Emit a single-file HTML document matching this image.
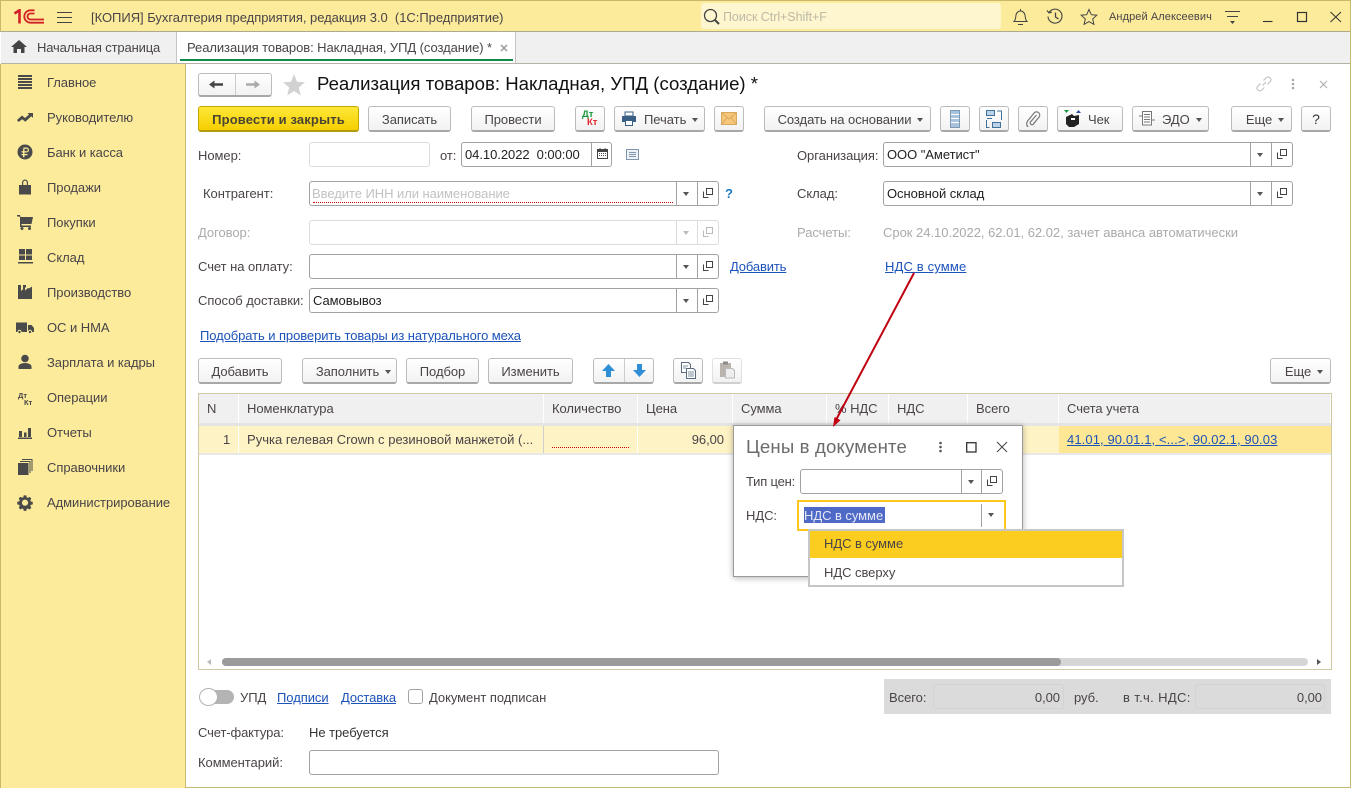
<!DOCTYPE html>
<html lang="ru"><head><meta charset="utf-8"><title>Реализация товаров</title>
<style>
*{box-sizing:border-box}
html,body{margin:0;padding:0}
body{width:1351px;height:788px;position:relative;overflow:hidden;background:#fff;font:13px "Liberation Sans",Arial,sans-serif;color:#4a4448;letter-spacing:-.05px}
.a,.t,.b,.f,svg.i{position:absolute}
.t{white-space:nowrap;line-height:16px;margin-top:1px}
.k{color:#222}
.l{color:#1c53b8;text-decoration:underline}
.g{color:#aaa}
.b{height:26px;top:106px;border:1px solid #bcbcbc;border-bottom:2px solid #a8a8a8;border-radius:3px;background:linear-gradient(#fff,#f2f2f2);text-align:center;line-height:25px;white-space:nowrap}
.r{top:358px}
.ar{display:inline-block;width:0;height:0;border:3px solid transparent;border-top:4px solid #555;border-bottom:0;margin-left:6px;vertical-align:2px}
.f{border:1px solid #a2a2a2;border-radius:3px;background:#fff;height:25px}
.f.dis{border-color:#dcdcdc}
.f u{position:absolute;top:0;bottom:0;width:1px;background:#a2a2a2}
.f.dis u{background:#dcdcdc}
.tri{position:absolute;width:0;height:0;border:3px solid transparent;border-top:4px solid #555;border-bottom:0}
.f.dis .tri{border-top-color:#bbb}
.v{position:absolute;left:3px;top:4px;line-height:16px;color:#222;white-space:nowrap}
.o{position:absolute;width:10px;height:10px;fill:none;stroke:#444;stroke-width:1}
.f.dis .o{stroke:#bbb}
.h{position:absolute;top:394px;height:29px;background:#f0f0f0;border-right:1px solid #fff;line-height:29px;padding-left:8px;white-space:nowrap}
.s{position:absolute;left:16px;width:18px;height:18px;fill:#4a4a4a}
</style></head><body>
<svg width="0" height="0" style="position:absolute"><defs><symbol id="op" viewBox="0 0 10 10"><path d="M3.500 .5h6v6h-6zM.5 3.500v6h5" fill="none" stroke-width="1"/></symbol></defs></svg>

<!-- top bar -->
<div class="a" style="left:0;top:0;width:1351px;height:32px;background:#fbeb9b;border:1px solid #c6b96c;border-bottom:1px solid #aeaa8f"></div>
<svg class="i" style="left:13px;top:9px" width="32" height="15" viewBox="0 0 32 15" fill="none" stroke="#d32027"><path d="M1.500 4.500l5-3.300V14.500" stroke-width="2.600"/><path d="M31 13.700H17.500a6 6 0 1 1 0-12.400h4" stroke-width="1.800"/><path d="M31 10.500H17.500a3 3 0 1 1 0-6h4" stroke-width="1.800"/></svg>
<svg class="i" style="left:57px;top:11px" width="15" height="12" stroke="#444"><path d="M0 1.500h15M0 6.500h15M0 11.500h15"/></svg>
<div class="t" style="left:91px;top:9px;letter-spacing:-.03px">[КОПИЯ] Бухгалтерия предприятия, редакция 3.0&nbsp; (1С:Предприятие)</div>
<div class="a" style="left:701px;top:3px;width:300px;height:26px;background:#fdf6cf;border-radius:3px"></div>
<svg class="i" style="left:702px;top:7px" width="19" height="19" fill="none" stroke="#444"><circle cx="8.500" cy="8.500" r="6" stroke-width="1.300"/><path d="M13 13l4 4" stroke-width="2"/></svg>
<div class="t" style="left:723px;top:8px;color:#bdb9a6;font-size:12.500px">Поиск Ctrl+Shift+F</div>
<svg class="i" style="left:1012px;top:8px" width="17" height="18" fill="none" stroke="#444"><path d="M2 13.500c2-2 1.500-4 2-6.500.5-2.500 2.500-4 4.500-4s4 1.500 4.500 4c.5 2.500 0 4.500 2 6.500zM8.500 1v2M6 16.500h5"/></svg>
<svg class="i" style="left:1046px;top:8px" width="18" height="17" fill="none" stroke="#444"><path d="M3 4.500a7 7 0 1 1-1 4M1 2.500l2 2.500 3-1" stroke-width="1.100"/><path d="M9.500 4.500v4.500l3 2" stroke-width="1.300"/></svg>
<svg class="i" style="left:1080px;top:8px" width="18" height="18" fill="none" stroke="#444"><path d="M9 1.500l2.300 5.200 5.500.5-4.100 3.700 1.200 5.500L9 13.600l-4.900 2.800 1.200-5.500L1.200 7.200l5.500-.5z"/></svg>
<div class="t" style="left:1109px;top:8px;font-size:11px;letter-spacing:.08px">Андрей Алексеевич</div>
<svg class="i" style="left:1225px;top:10px" width="16" height="15" stroke="#444" fill="#444"><path d="M0 1.500h15M2 6.500h11" fill="none"/><path d="M5 11h5l-2.500 3z" stroke="none"/></svg>
<svg class="i" style="left:1263px;top:10px" width="80" height="14" fill="none" stroke="#333"><path d="M0 11.500h9.500" stroke-width="1.100"/><rect x="34.500" y="2.500" width="9" height="9" stroke-width="1.200"/><path d="M67.500 2l10.500 10M78 2L67.500 12" stroke-width="1"/></svg>

<!-- tabs -->
<div class="a" style="left:1px;top:32px;width:1349px;height:32px;background:#f0f0f0;border-bottom:1px solid #b5b3a6"></div>
<div class="a" style="left:176px;top:32px;width:340px;height:32px;background:#fff;border-left:1px solid #c4c4c4;border-right:1px solid #c4c4c4;border-bottom:1px solid #b5b3a6"></div>
<div class="a" style="left:180px;top:59px;width:333px;height:2px;background:#0e8a4a"></div>
<svg class="i" style="left:11px;top:40px" width="16" height="13" fill="#444"><path d="M8 0l8 7h-2.500v6H10V9H6v4H2.500V7H0z"/></svg>
<div class="t" style="left:37px;top:39px;letter-spacing:-.15px">Начальная страница</div>
<div class="t" style="left:187px;top:39px;letter-spacing:-.07px">Реализация товаров: Накладная, УПД (создание) *</div>
<svg class="i" style="left:500px;top:44px" width="8" height="8" stroke="#999" stroke-width="1.500"><path d="M1 1l6 6M7 1l-6 6"/></svg>

<!-- sidebar -->
<div class="a" style="left:0;top:64px;width:186px;height:724px;background:#fbeb9b;border-left:1px solid #c6b96c;border-right:1px solid #c6b96c"></div>
<svg class="s" style="top:73px" viewBox="0 0 18 18"><path d="M2 2h14v2H2zM2 5h14v2H2zM2 8h14v2H2zM2 11h14v2H2zM2 14h14v2H2z"/></svg>
<svg class="s" style="top:108px" viewBox="0 0 18 18"><path d="M1 12l5-4.500 3 2.500 4-3.500-1.500-1.500H17v5l-1.700-1.700-6 5.500-3-2.500L2.500 14z"/></svg>
<svg class="s" style="top:143px" viewBox="0 0 18 18"><circle cx="9" cy="9" r="7.500"/><path d="M7.500 4.500h3a2.300 2.300 0 0 1 0 5h-2V11h3v1.300h-3v2H7v-2H5.500V11H7V9.500H5.500V8.300H7zm1 1.200v2.600h2a1.300 1.300 0 0 0 0-2.600z" fill="#fbeb9b"/></svg>
<svg class="s" style="top:178px" viewBox="0 0 18 18"><path d="M3 7h3V4.500a3 3 0 0 1 6 0V7h3v9.500H3zM7.200 7h3.600V4.500a1.800 1.800 0 0 0-3.600 0z"/></svg>
<svg class="s" style="top:213px" viewBox="0 0 18 18"><path d="M1 2h3l.5 2H17l-1.500 7H5.500v1.500H15V14H4V4L2.800 3.500H1z"/><circle cx="6" cy="15.500" r="1.500"/><circle cx="13.500" cy="15.500" r="1.500"/></svg>
<svg class="s" style="top:248px" viewBox="0 0 18 18"><path d="M3 1h6v5.500H3zM10 1h6v5.500h-6zM3 7.500h6V12H3zM10 7.500h6V12h-6zM2 14h15v1.500H2z"/></svg>
<svg class="s" style="top:283px" viewBox="0 0 18 18"><path d="M2 2h3v6l4-3.500v3l3-2.500 1 .5 3-2V16H2zM7 2h3v2L7 6.500z"/></svg>
<svg class="s" style="top:318px" viewBox="0 0 18 18"><path d="M0 4.500h11V14H0zM12 7h3.500l2.500 3v4h-6z"/><circle cx="3.500" cy="14" r="1.700" stroke="#fbeb9b"/><circle cx="14" cy="14" r="1.700" stroke="#fbeb9b"/></svg>
<svg class="s" style="top:353px" viewBox="0 0 18 18"><circle cx="9" cy="5.500" r="3.800"/><path d="M2.500 16v-2.500c0-2 3-3.500 6.500-3.500s6.500 1.500 6.500 3.500V16z"/></svg>
<div class="t" style="left:18px;top:391px;font-size:7.500px;line-height:8px;font-weight:bold;letter-spacing:0">Дт</div>
<div class="t" style="left:24px;top:398px;font-size:7.500px;line-height:8px;font-weight:bold;letter-spacing:0">Кт</div>
<svg class="s" style="top:423px" viewBox="0 0 18 18"><path d="M3 8h3v6H3zM8 9.500h2.500V14H8zM12 5h3v9h-3zM2 14.500h14V16H2z"/></svg>
<svg class="s" style="top:458px" viewBox="0 0 18 18"><path d="M2 5h10.500v12H2z"/><path d="M4 3.500h10v11.500M6 1.500h10v11.500" fill="none" stroke="#4a4a4a"/></svg>
<svg class="s" style="top:493px" viewBox="0 0 18 18"><path fill-rule="evenodd" d="M7.500 1.500h3l.4 2.200 1.300.6 2-1.200 2 2-1.200 2 .6 1.300 2.200.4v2.900l-2.200.5-.6 1.300 1.200 2-2 2-2-1.200-1.300.6-.4 2.100h-3l-.4-2.100-1.300-.6-2 1.200-2-2 1.200-2-.6-1.300-2.200-.5V8.700l2.200-.4.6-1.300-1.200-2 2-2 2 1.200 1.300-.6zM9 6.300a3.500 3.500 0 1 0 0 7 3.500 3.500 0 0 0 0-7z" transform="translate(1.100 1.100) scale(.88)"/></svg>
<div class="t" style="left:47px;top:74px">Главное</div>
<div class="t" style="left:47px;top:109px">Руководителю</div>
<div class="t" style="left:47px;top:144px">Банк и касса</div>
<div class="t" style="left:47px;top:179px">Продажи</div>
<div class="t" style="left:47px;top:214px">Покупки</div>
<div class="t" style="left:47px;top:249px">Склад</div>
<div class="t" style="left:47px;top:284px">Производство</div>
<div class="t" style="left:47px;top:319px">ОС и НМА</div>
<div class="t" style="left:47px;top:354px">Зарплата и кадры</div>
<div class="t" style="left:47px;top:389px">Операции</div>
<div class="t" style="left:47px;top:424px">Отчеты</div>
<div class="t" style="left:47px;top:459px">Справочники</div>
<div class="t" style="left:47px;top:494px">Администрирование</div>

<!-- right & bottom frame -->
<div class="a" style="left:1350px;top:0;width:1px;height:788px;background:#c6b96c"></div>
<div class="a" style="left:186px;top:787px;width:1165px;height:1px;background:#c6b96c"></div>

<!-- form header -->
<div class="a" style="left:198px;top:73px;width:74px;height:24px;border:1px solid #bcbcbc;border-bottom:2px solid #a8a8a8;border-radius:3px;background:linear-gradient(#fff,#f2f2f2)"></div>
<div class="a" style="left:235px;top:74px;width:1px;height:21px;background:#ccc"></div>
<svg class="i" style="left:209px;top:79px" width="15" height="11" fill="#444"><path d="M0 5.500L5.500 1.500v2.800H14v2.400H5.500v2.800z"/></svg>
<svg class="i" style="left:246px;top:79px" width="15" height="11" fill="#aaa"><path d="M14 5.500L8.500 1.500v2.800H0v2.400h8.500v2.800z"/></svg>
<svg class="i" style="left:282px;top:73px" width="24" height="23" fill="#d2d2d2"><path d="M12 1l3 7.700 8 .6-6.200 5.200 2 8L12 18l-6.800 4.500 2-8L1 9.300l8-.6z"/></svg>
<div class="t k" style="left:317px;top:72px;font-size:18.600px;line-height:22px;color:#111;letter-spacing:0">Реализация товаров: Накладная, УПД (создание) *</div>
<svg class="i" style="left:1255px;top:75px" width="18" height="18" fill="none" stroke="#c8c8c8" stroke-width="1.300"><path d="M7.500 10.500L11 7M5.500 8.500l-2.700 2.700a2.700 2.700 0 0 0 3.900 3.900l2.700-2.700M8.500 5.500l2.700-2.700a2.700 2.700 0 0 1 3.900 3.900l-2.700 2.700"/></svg>
<svg class="i" style="left:1291px;top:78px" width="4" height="12" fill="#aaa"><circle cx="2" cy="2" r="1.300"/><circle cx="2" cy="6" r="1.300"/><circle cx="2" cy="10" r="1.300"/></svg>
<svg class="i" style="left:1319px;top:80px" width="9" height="9" stroke="#aaa"><path d="M1 1l7 7M8 1l-7 7"/></svg>

<!-- toolbar -->
<div class="b" style="left:198px;width:161px;background:linear-gradient(#ffe839,#f5cf00);border-color:#c5a700;border-bottom-color:#b29a10;font-weight:bold;color:#4a4433;letter-spacing:.13px">Провести и закрыть</div>
<div class="b" style="left:368px;width:83px">Записать</div>
<div class="b" style="left:471px;width:84px">Провести</div>
<div class="b" style="left:575px;width:30px"></div>
<div class="t" style="left:582px;top:108px;font-size:9.500px;line-height:11px;font-weight:bold;color:#1a9a3a;letter-spacing:0">Дт</div>
<div class="t" style="left:587px;top:116px;font-size:9.500px;line-height:11px;font-weight:bold;color:#e0262e;letter-spacing:0">Кт</div>
<div class="b" style="left:614px;width:91px;text-align:left;padding-left:29px">Печать<span class="ar"></span></div>
<svg class="i" style="left:621px;top:111px" width="16" height="15"><path d="M4 1h8v4H4z" fill="#fff" stroke="#3a5f85"/><path d="M1 5h14v6h-3V9H4v2H1z" fill="#3a5f85"/><path d="M4.500 9.500h7v5h-7z" fill="#fff" stroke="#3a5f85"/></svg>
<div class="b" style="left:714px;width:30px"></div>
<svg class="i" style="left:721px;top:112px" width="16" height="13"><rect x=".5" y=".5" width="15" height="12" fill="#f6c779" stroke="#d9a860"/><path d="M.5 .5L8 7l7.500-6.500M.5 12.500L6 5.500M15.500 12.500L10 5.500" fill="none" stroke="#d9a860"/></svg>
<div class="b" style="left:764px;width:167px;padding-left:6px">Создать на основании<span class="ar"></span></div>
<div class="b" style="left:940px;width:30px"></div>
<svg class="i" style="left:950px;top:110px" width="10" height="18"><rect x=".5" y=".5" width="9" height="17" fill="#a9c3dc" stroke="#7d9ab5"/><path d="M1 4.500h8M1 8.500h8M1 12.500h8" stroke="#fff"/></svg>
<div class="b" style="left:979px;width:30px"></div>
<svg class="i" style="left:986px;top:110px" width="16" height="18" fill="none" stroke="#41729c"><rect x=".5" y=".5" width="8" height="5" fill="#bcd2e6"/><rect x="6.500" y="12.500" width="8" height="5" fill="#bcd2e6"/><path d="M1 8.500h5M11 1h4.500v9M.5 10v7.500h3"/></svg>
<div class="b" style="left:1018px;width:30px"></div>
<svg class="i" style="left:1025px;top:110px" width="16" height="17" fill="none" stroke="#777" stroke-width="1.200"><path d="M11.500 5l-6 7a1.800 1.800 0 0 0 2.600 2.400l6-7.400a3.200 3.200 0 0 0-4.800-4.200l-6.500 8a4.600 4.600 0 0 0 7 6"/></svg>
<div class="b" style="left:1057px;width:66px;text-align:left;padding-left:30px">Чек</div>
<svg class="i" style="left:1063px;top:110px" width="20" height="18"><path d="M1 0h5L3.500 3z" fill="#1a9a3a"/><path d="M13 3h5l-2.500-3z" fill="#2a4fa0"/><path d="M3 7l6-3 2 2 5-1v9l-5 3H6l-3-3z" fill="#222"/><rect x="8" y="8" width="4" height="2" fill="#fff"/></svg>
<div class="b" style="left:1132px;width:77px;text-align:left;padding-left:29px">ЭДО<span class="ar"></span></div>
<svg class="i" style="left:1139px;top:111px" width="16" height="15" fill="none" stroke="#777"><rect x="3.500" y=".5" width="9" height="13.500" fill="#fff"/><path d="M5 3.500h6M5 6h6M5 8.500h6M5 11h6M0 5h3M13 9h3"/></svg>
<div class="b" style="left:1231px;width:61px;padding-left:7px">Еще<span class="ar"></span></div>
<div class="b" style="left:1301px;width:30px;font-size:14px;color:#333">?</div>

<!-- form left -->
<div class="t" style="left:198px;top:147px">Номер:</div>
<div class="f dis" style="left:309px;top:142px;width:121px"></div>
<div class="t" style="left:440px;top:147px">от:</div>
<div class="f" style="left:461px;top:142px;width:151px"><span class="v">04.10.2022&nbsp; 0:00:00</span><u style="left:129px"></u>
<svg class="a" style="left:135px;top:5px" width="11" height="11"><path d="M.5 1.500h10v9H.5z" fill="none" stroke="#444"/><path d="M.5 1.500h10v2.500H.5zM2.500 0h1v2h-1zM7.500 0h1v2h-1z" fill="#444"/><path d="M2 5.500h7M2 7.500h7" stroke="#444" stroke-dasharray="1 1"/></svg></div>
<svg class="i" style="left:626px;top:149px" width="14" height="12" fill="none" stroke="#7d95ad"><rect x=".5" y=".5" width="12" height="10" fill="#eef2f6"/><path d="M3 3.500h7M3 5.500h7M3 7.500h7"/></svg>

<div class="t" style="left:203px;top:185px">Контрагент:</div>
<div class="f" style="left:309px;top:181px;width:410px"><span class="v" style="color:#c2c2c2;left:2px">Введите ИНН или наименование</span><div class="a" style="left:3px;top:20px;width:360px;border-top:1px dotted #d00"></div><u style="left:366px"></u><u style="left:387px"></u><i class="tri" style="left:373px;top:10px"></i><svg class="o" style="left:393px;top:6px"><use href="#op"/></svg></div>
<div class="t" style="left:725px;top:185px;color:#1a7ac4;font-weight:bold">?</div>

<div class="t g" style="left:198px;top:224px">Договор:</div>
<div class="f dis" style="left:309px;top:220px;width:410px"><u style="left:366px"></u><u style="left:387px"></u><i class="tri" style="left:373px;top:10px"></i><svg class="o" style="left:393px;top:6px"><use href="#op"/></svg></div>

<div class="t" style="left:198px;top:258px">Счет на оплату:</div>
<div class="f" style="left:309px;top:254px;width:410px"><u style="left:366px"></u><u style="left:387px"></u><i class="tri" style="left:373px;top:10px"></i><svg class="o" style="left:393px;top:6px"><use href="#op"/></svg></div>
<div class="t l" style="left:730px;top:258px;letter-spacing:-.15px">Добавить</div>

<div class="t" style="left:198px;top:292px">Способ доставки:</div>
<div class="f" style="left:309px;top:288px;width:410px"><span class="v">Самовывоз</span><u style="left:366px"></u><u style="left:387px"></u><i class="tri" style="left:373px;top:10px"></i><svg class="o" style="left:393px;top:6px"><use href="#op"/></svg></div>
<div class="t l" style="left:200px;top:327px;letter-spacing:-.08px">Подобрать и проверить товары из натурального меха</div>

<!-- form right -->
<div class="t" style="left:797px;top:147px">Организация:</div>
<div class="f" style="left:883px;top:142px;width:410px"><span class="v">ООО "Аметист"</span><u style="left:366px"></u><u style="left:387px"></u><i class="tri" style="left:373px;top:10px"></i><svg class="o" style="left:393px;top:6px"><use href="#op"/></svg></div>
<div class="t" style="left:797px;top:185px">Склад:</div>
<div class="f" style="left:883px;top:181px;width:410px"><span class="v">Основной склад</span><u style="left:366px"></u><u style="left:387px"></u><i class="tri" style="left:373px;top:10px"></i><svg class="o" style="left:393px;top:6px"><use href="#op"/></svg></div>
<div class="t g" style="left:797px;top:224px">Расчеты:</div>
<div class="t g" style="left:883px;top:224px;letter-spacing:-.02px">Срок 24.10.2022, 62.01, 62.02, зачет аванса автоматически</div>
<div class="t l" style="left:885px;top:258px;letter-spacing:.15px">НДС в сумме</div>

<!-- table toolbar -->
<div class="b r" style="left:198px;width:84px">Добавить</div>
<div class="b r" style="left:302px;width:95px;padding-left:8px">Заполнить<span class="ar"></span></div>
<div class="b r" style="left:406px;width:73px">Подбор</div>
<div class="b r" style="left:488px;width:85px">Изменить</div>
<div class="b r" style="left:593px;width:61px"></div>
<div class="a" style="left:624px;top:359px;width:1px;height:23px;background:#ccc"></div>
<svg class="i" style="left:601px;top:363px" width="15" height="15" fill="#2f8fd6"><path d="M7.500 1L14 8h-4v6H5V8H1z"/></svg>
<svg class="i" style="left:632px;top:363px" width="15" height="15" fill="#2f8fd6"><path d="M7.500 14L14 7h-4V1H5v6H1z"/></svg>
<div class="b r" style="left:673px;width:30px"></div>
<svg class="i" style="left:680px;top:362px" width="17" height="17" fill="#fff" stroke="#5a6d80"><path d="M1.500 .5h7l2 2v8h-9z"/><path d="M6.500 6.500h7l2 2v8h-9z"/><path d="M3 4h5M3 6h3M8 10h6M8 12h6M8 14h6" stroke-width=".8"/></svg>
<div class="b r" style="left:712px;width:30px;border-color:#e0e0e0;border-bottom-color:#d0d0d0"></div>
<svg class="i" style="left:719px;top:361px" width="17" height="18"><rect x="1" y="2" width="11" height="14" fill="#b9b4ae"/><rect x="4" y="0.500" width="5" height="3" fill="#8f8a86"/><path d="M6.500 7.500h7l2 2v7.500h-9z" fill="#eee" stroke="#bbb"/></svg>
<div class="b r" style="left:1270px;width:61px;padding-left:7px">Еще<span class="ar"></span></div>

<!-- table -->
<div class="a" style="left:198px;top:393px;width:1134px;height:277px;border:1px solid #cfc9a4;background:#fff"></div>
<div class="a" style="left:199px;top:423px;width:1132px;height:3px;background:#e4e4e4"></div>
<div class="h" style="left:199px;width:40px">N</div>
<div class="h" style="left:239px;width:305px">Номенклатура</div>
<div class="h" style="left:544px;width:94px">Количество</div>
<div class="h" style="left:638px;width:95px">Цена</div>
<div class="h" style="left:733px;width:94px">Сумма</div>
<div class="h" style="left:827px;width:62px">% НДС</div>
<div class="h" style="left:889px;width:79px">НДС</div>
<div class="h" style="left:968px;width:91px">Всего</div>
<div class="h" style="left:1059px;width:272px">Счета учета</div>
<div class="a" style="left:199px;top:426px;width:1132px;height:27px;background:#fef3c5"></div>
<div class="a" style="left:1059px;top:426px;width:272px;height:27px;background:#fde694"></div>
<div class="a" style="left:238px;top:426px;width:1px;height:27px;background:#fff"></div>
<div class="a" style="left:543px;top:426px;width:1px;height:28px;background:#cfcfcf"></div>
<div class="a" style="left:637px;top:426px;width:1px;height:27px;background:#fff"></div>
<div class="a" style="left:199px;top:453px;width:1132px;height:2px;background:#e8e8e8"></div>
<div class="t" style="left:223px;top:431px">1</div>
<div class="t" style="left:247px;top:431px;letter-spacing:.02px">Ручка гелевая Crown с резиновой манжетой (...</div>
<div class="a" style="left:552px;top:447px;width:77px;border-top:1px dotted #c00"></div>
<div class="t" style="right:627px;top:431px">96,00</div>
<div class="t l" style="left:1067px;top:431px;letter-spacing:.1px">41.01, 90.01.1, &lt;...&gt;, 90.02.1, 90.03</div>
<i class="tri" style="left:207px;top:659px;border:3px solid transparent;border-right:4px solid #bbb;border-left:0"></i>
<div class="a" style="left:222px;top:658px;width:1086px;height:8px;background:#d6d6d6;border-radius:4px"></div>
<div class="a" style="left:222px;top:658px;width:839px;height:8px;background:#9b9b9b;border-radius:4px"></div>
<i class="tri" style="left:1317px;top:659px;border:3px solid transparent;border-left:4px solid #555;border-right:0"></i>

<!-- bottom -->
<div class="a" style="left:207px;top:690px;width:27px;height:14px;background:#b4b4b4;border-radius:7px"></div>
<div class="a" style="left:199px;top:688px;width:19px;height:18px;background:#fff;border:1px solid #b4b4b4;border-radius:50%"></div>
<div class="t" style="left:240px;top:689px">УПД</div>
<div class="t l" style="left:277px;top:689px">Подписи</div>
<div class="t l" style="left:341px;top:689px;letter-spacing:-.1px">Доставка</div>
<div class="a" style="left:408px;top:689px;width:15px;height:15px;border:1px solid #a2a2a2;border-radius:3px;background:#fff"></div>
<div class="t" style="left:429px;top:689px">Документ подписан</div>
<div class="t" style="left:198px;top:724px;letter-spacing:-.12px">Счет-фактура:</div>
<div class="t" style="left:309px;top:724px;color:#333">Не требуется</div>
<div class="t" style="left:198px;top:754px">Комментарий:</div>
<div class="f" style="left:309px;top:750px;width:410px"></div>

<div class="a" style="left:884px;top:679px;width:447px;height:35px;background:#dbdbdb"></div>
<div class="a" style="left:933px;top:684px;width:131px;height:25px;border:1px solid #d3d3d3;border-radius:3px"></div>
<div class="a" style="left:1195px;top:684px;width:130px;height:25px;border:1px solid #d3d3d3;border-radius:3px"></div>
<div class="t" style="left:889px;top:689px">Всего:</div>
<div class="t" style="right:291px;top:689px">0,00</div>
<div class="t" style="left:1074px;top:689px">руб.</div>
<div class="t" style="left:1123px;top:689px;letter-spacing:.35px">в т.ч. НДС:</div>
<div class="t" style="right:29px;top:689px">0,00</div>

<!-- popup -->
<div class="a" style="left:733px;top:425px;width:290px;height:152px;background:#fff;border:1px solid #9a9a9a;box-shadow:0 1px 6px rgba(0,0,0,.3)"></div>
<div class="t" style="left:746px;top:435px;font-size:18.600px;line-height:22px;color:#6b6b6b;letter-spacing:.15px">Цены в документе</div>
<svg class="i" style="left:938px;top:441px" width="5" height="12" fill="#555"><circle cx="2.500" cy="2" r="1.300"/><circle cx="2.500" cy="6" r="1.300"/><circle cx="2.500" cy="10" r="1.300"/></svg>
<svg class="i" style="left:966px;top:442px" width="11" height="11" fill="none" stroke="#333" stroke-width="1.300"><rect x=".7" y=".7" width="9.300" height="9.300"/></svg>
<svg class="i" style="left:996px;top:441px" width="12" height="12" fill="none" stroke="#444"><path d="M1 1l10 10M11 1L1 11"/></svg>
<div class="t" style="left:746px;top:473px;letter-spacing:-.2px">Тип цен:</div>
<div class="f" style="left:800px;top:469px;width:203px"><u style="left:160px"></u><u style="left:180px"></u><i class="tri" style="left:167px;top:10px"></i><svg class="o" style="left:186px;top:6px"><use href="#op"/></svg></div>
<div class="t" style="left:746px;top:507px">НДС:</div>
<div class="a" style="left:797px;top:500px;width:209px;height:31px;border:2px solid #fbc91e;background:#fff"></div>
<div class="a" style="left:804px;top:507px;width:81px;height:16px;background:#4f69c6"></div>
<div class="t" style="left:804px;top:507px;color:#e6e9f5">НДС в сумме</div>
<div class="a" style="left:981px;top:504px;width:1px;height:23px;background:#a2a2a2"></div>
<i class="tri" style="left:988px;top:513px"></i>
<div class="a" style="left:808px;top:529px;width:316px;height:58px;background:#fff;border:2px solid #c6c6c6"></div>
<div class="a" style="left:810px;top:531px;width:312px;height:27px;background:#fbcd1e"></div>
<div class="t" style="left:824px;top:535px">НДС в сумме</div>
<div class="t" style="left:824px;top:564px">НДС сверху</div>

<!-- red arrow -->
<svg class="i" style="left:820px;top:265px" width="110" height="170"><path d="M94 8L16.500 154" stroke="#c00010" stroke-width="2" fill="none"/><path d="M13 162l1.500-10 6 3.200z" fill="#c00010"/></svg>
</body></html>
